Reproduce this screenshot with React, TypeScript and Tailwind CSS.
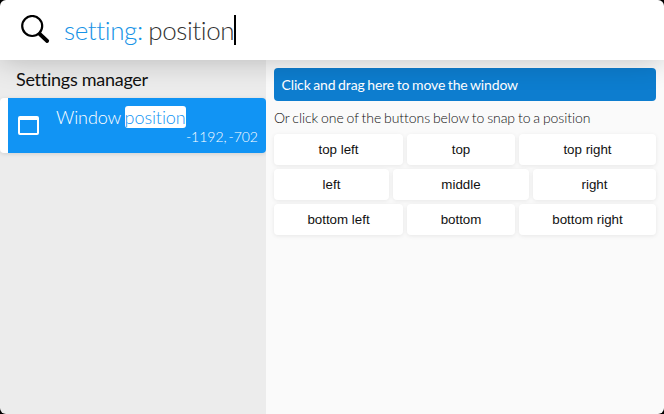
import React from 'react';

const rows = [
  [
    { label: 'top left', width: 'w-[129px]' },
    { label: 'top', width: 'w-[108px]' },
    { label: 'top right', width: 'w-[137px]' },
  ],
  [
    { label: 'left', width: 'w-[115px]' },
    { label: 'middle', width: 'w-[136px]' },
    { label: 'right', width: 'w-[123px]' },
  ],
  [
    { label: 'bottom left', width: 'w-[129px]' },
    { label: 'bottom', width: 'w-[108px]' },
    { label: 'bottom right', width: 'w-[137px]' },
  ],
];

function SearchBar() {
  return (
    <header className="relative z-10 flex h-[60px] shrink-0 items-center bg-white pl-5 shadow-[0_0_30px_rgba(0,0,0,0.24)]">
      <svg className="h-[30px] w-[30px] shrink-0" viewBox="0 0 30 30" fill="none" stroke="#000">
        <circle cx="12.2" cy="11" r="10" strokeWidth="2.2" />
        <path d="M19.7 19L27.2 26" strokeWidth="3.8" strokeLinecap="round" />
      </svg>
      <div className="ml-[14px] flex items-center whitespace-pre text-[26px] font-light leading-[30px] tracking-[-0.4px] [word-spacing:-1.2px]">
        <span className="text-[#1793e6]">setting: </span>
        <span className="text-[#333]">position</span>
        <span className="h-[30px] w-[2px] bg-black" />
      </div>
    </header>
  );
}

function Sidebar() {
  return (
    <aside className="w-[266px] shrink-0 bg-[#ececec]">
      <h2 className="flex h-[38px] items-center pl-4 text-[18px] leading-[22px] tracking-[-0.27px] text-[#111]">Settings manager</h2>
      <div className="flex h-[55px] rounded border-l-8 border-white bg-[#1194f4] text-white shadow-[0_1px_4px_rgba(0,0,0,0.12)]">
        <svg className="ml-[10px] mt-[18px] h-[19px] w-[21px] shrink-0" viewBox="0 0 21 19" fill="none" stroke="#fff">
          <rect x="1" y="1" width="19" height="17" rx="1" strokeWidth="2" />
          <path d="M1 2.5H20" strokeWidth="3" />
        </svg>
        <div className="flex min-w-0 flex-1 flex-col pl-[17px] pr-2 pt-2">
          <div className="flex h-[22px] items-center whitespace-pre text-[18px] font-light leading-[22px] tracking-[-0.1px] [word-spacing:-1px]">
            <span>Window </span>
            <span className="rounded-[3px] bg-white text-[#1194f4]">position</span>
          </div>
          <div className="text-right text-[14px] font-light leading-[18px] [word-spacing:-2px]">-1192, -702</div>
        </div>
      </div>
    </aside>
  );
}

function PositionPanel() {
  return (
    <main className="flex-1 bg-[#fafafa] px-2 pt-2">
      <div className="flex h-[33px] items-center rounded bg-[#0d7dcf] pl-[7.5px] text-[14px] tracking-[-0.14px] text-white [word-spacing:-0.8px]">
        Click and drag here to move the window
      </div>
      <p className="flex h-[33px] items-center whitespace-nowrap text-[14px] font-light tracking-[-0.07px] text-[#111] [word-spacing:-0.8px]">
        Or click one of the buttons below to snap to a position
      </p>
      <div className="flex flex-col gap-1">
        {rows.map((row) => (
          <div key={row[0].label} className="flex gap-1">
            {row.map(({ label, width }) => (
              <button
                key={label}
                className={`${width} h-[31px] rounded bg-white font-['Liberation_Sans',Arial,sans-serif] text-[13.333px] leading-[15px] text-[#111] shadow-[0_1px_4px_rgba(0,0,0,0.08)]`}
              >
                {label}
              </button>
            ))}
          </div>
        ))}
      </div>
    </main>
  );
}

export default function App() {
  return (
    <div className="h-[414px] w-[664px] bg-black font-['Lato',sans-serif] [font-variant-ligatures:none]">
      <div className="flex h-full flex-col overflow-hidden rounded-[6px]">
        <SearchBar />
        <div className="flex min-h-0 flex-1">
          <Sidebar />
          <PositionPanel />
        </div>
      </div>
    </div>
  );
}
